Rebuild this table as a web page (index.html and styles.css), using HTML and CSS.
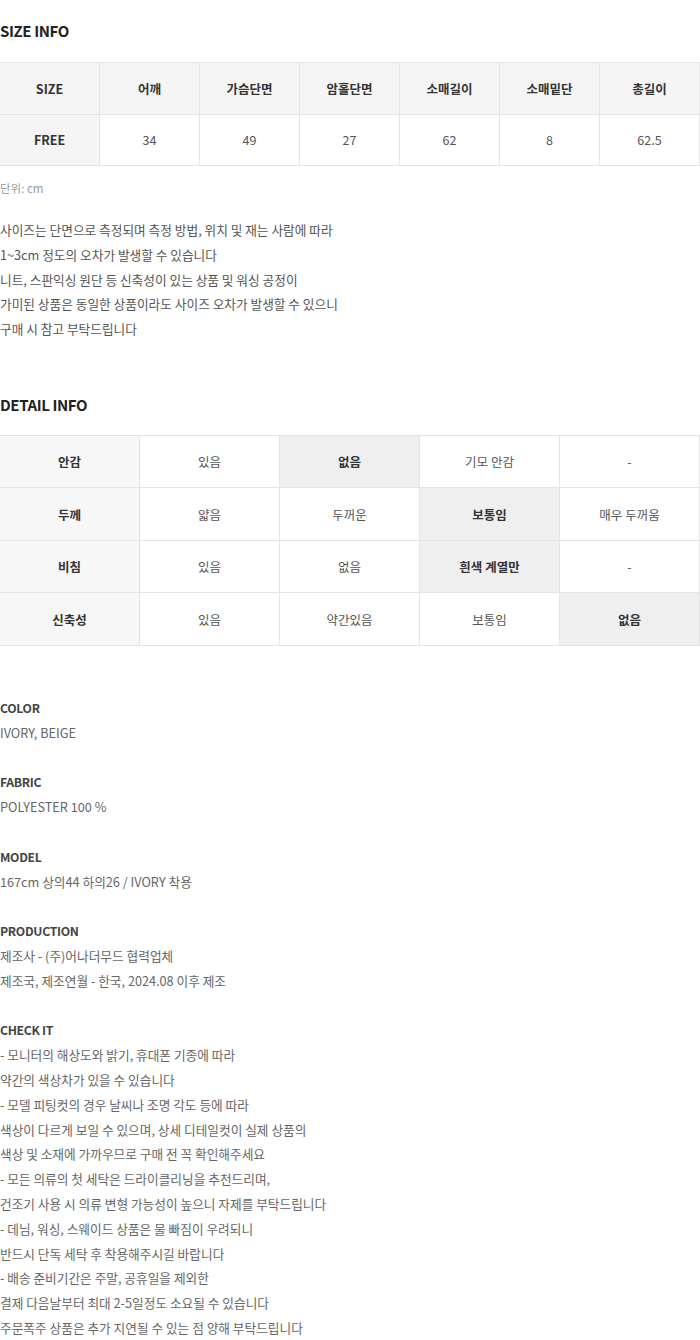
FILE: index.html
```html
<!DOCTYPE html>
<html>
  <head>
    <meta charset="utf-8">
    <title>size info</title>
    <link rel="stylesheet" href="styles.css">
  </head>
  <body>
    <section class="size-info">
      <h2 class="section-title">SIZE INFO</h2>
      <table class="size-table">
        <tr class="head-row">
          <th>SIZE</th>
          <th>어깨</th>
          <th>가슴단면</th>
          <th>암홀단면</th>
          <th>소매길이</th>
          <th>소매밑단</th>
          <th>총길이</th>
        </tr>
        <tr>
          <th>FREE</th>
          <td>34</td>
          <td>49</td>
          <td>27</td>
          <td>62</td>
          <td>8</td>
          <td>62.5</td>
        </tr>
      </table>
      <p class="unit">단위: cm</p>
      <p class="notice">
        사이즈는 단면으로 측정되며 측정 방법, 위치 및 재는 사람에 따라<br>
        1~3cm 정도의 오차가 발생할 수 있습니다<br>
        니트, 스판익싱 원단 등 신축성이 있는 상품 및 워싱 공정이<br>
        가미된 상품은 동일한 상품이라도 사이즈 오차가 발생할 수 있으니<br>
        구매 시 참고 부탁드립니다
      </p>
    </section>

    <section class="detail-info">
      <h2 class="section-title">DETAIL INFO</h2>
      <table class="detail-table">
        <tr>
          <th>안감</th>
          <td>있음</td>
          <td class="picked">없음</td>
          <td>기모 안감</td>
          <td>-</td>
        </tr>
        <tr>
          <th>두께</th>
          <td>얇음</td>
          <td>두꺼운</td>
          <td class="picked">보통임</td>
          <td>매우 두꺼움</td>
        </tr>
        <tr>
          <th>비침</th>
          <td>있음</td>
          <td>없음</td>
          <td class="picked">흰색 계열만</td>
          <td>-</td>
        </tr>
        <tr>
          <th>신축성</th>
          <td>있음</td>
          <td>약간있음</td>
          <td>보통임</td>
          <td class="picked">없음</td>
        </tr>
      </table>
    </section>

    <section class="product-info">
      <div class="info-block">
        <h3>COLOR</h3>
        <p>IVORY, BEIGE</p>
      </div>
      <div class="info-block">
        <h3>FABRIC</h3>
        <p>POLYESTER 100 %</p>
      </div>
      <div class="info-block">
        <h3>MODEL</h3>
        <p>167cm 상의44 하의26 / IVORY 착용</p>
      </div>
      <div class="info-block">
        <h3>PRODUCTION</h3>
        <p>제조사 - (주)어나더무드 협력업체<br>
        제조국, 제조연월 - 한국, 2024.08 이후 제조</p>
      </div>
      <div class="info-block">
        <h3>CHECK IT</h3>
        <p>- 모니터의 해상도와 밝기, 휴대폰 기종에 따라<br>
        약간의 색상차가 있을 수 있습니다<br>
        - 모델 피팅컷의 경우 날씨나 조명 각도 등에 따라<br>
        색상이 다르게 보일 수 있으며, 상세 디테일컷이 실제 상품의<br>
        색상 및 소재에 가까우므로 구매 전 꼭 확인해주세요<br>
        - 모든 의류의 첫 세탁은 드라이클리닝을 추천드리며,<br>
        건조기 사용 시 의류 변형 가능성이 높으니 자제를 부탁드립니다<br>
        - 데님, 워싱, 스웨이드 상품은 물 빠짐이 우려되니<br>
        반드시 단독 세탁 후 착용해주시길 바랍니다<br>
        - 배송 준비기간은 주말, 공휴일을 제외한<br>
        결제 다음날부터 최대 2-5일정도 소요될 수 있습니다<br>
        주문폭주 상품은 추가 지연될 수 있는 점 양해 부탁드립니다</p>
      </div>
    </section>
  </body>
</html>
```

FILE: styles.css
```css
* {
  margin: 0;
  padding: 0;
  box-sizing: border-box;
}

body {
  font-family: 'Noto Sans CJK KR', 'Noto Sans', sans-serif;
  background: #ffffff;
  color: #555;
  width: 700px;
}

.section-title {
  font-size: 15px;
  font-weight: 700;
  color: #222;
  line-height: 20px;
  letter-spacing: -0.4px;
}

.size-info {
  padding-top: 21px;
}

.size-info .section-title {
  margin-bottom: 21px;
}

table {
  width: 701px;
  margin-left: -1px;
  border-collapse: collapse;
  table-layout: fixed;
}

th, td {
  border: 1px solid #e4e4e4;
  text-align: center;
  font-size: 12.5px;
}

th {
  font-weight: 700;
  color: #333;
  background: #f5f5f5;
}

td {
  font-weight: 400;
  color: #555;
}

.size-table tr {
  height: 51.5px;
}

.unit {
  margin-top: 12px;
  font-size: 11.5px;
  line-height: 20px;
  color: #9a9a9a;
}

.notice {
  margin-top: 20px;
  font-size: 12.7px;
  line-height: 24.8px;
  color: #555;
}

.detail-info {
  margin-top: 53px;
}

.detail-info .section-title {
  margin-bottom: 20px;
}

.detail-table tr {
  height: 52.5px;
}

.detail-table th {
  background: #f7f7f7;
}

.detail-table td.picked {
  background: #efefef;
  font-weight: 700;
  color: #333;
}

.product-info {
  margin-top: 50px;
  display: flex;
  flex-direction: column;
  gap: 24.8px;
  padding-bottom: 10px;
}

.info-block h3 {
  font-size: 12.2px;
  font-weight: 700;
  color: #444;
  line-height: 24.8px;
  letter-spacing: -0.3px;
}

.info-block p {
  font-size: 12.7px;
  line-height: 24.8px;
  color: #666;
}
```
